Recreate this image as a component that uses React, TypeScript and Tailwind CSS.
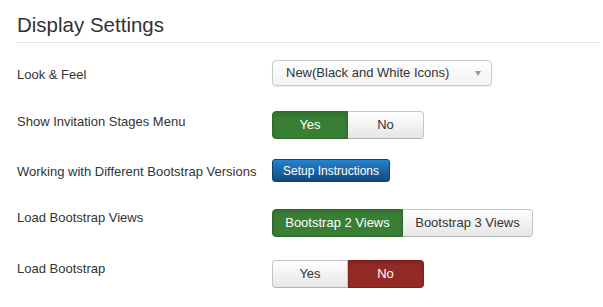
import React from "react";

const font = { fontFamily: '"Liberation Sans", Arial, sans-serif' };

function Row({ label, pt, h, children }: { label: string; pt: string; h: string; children: React.ReactNode }) {
  return (
    <div className={`flex items-start ${h}`}>
      <div className={`w-[255px] shrink-0 text-[13px] leading-[18px] text-[#333] ${pt}`}>{label}</div>
      <div>{children}</div>
    </div>
  );
}

const offBtn =
  "flex items-center justify-center h-full text-[13px] text-[#333] bg-gradient-to-b from-white to-[#e6e6e6] border border-[#c5c5c5] border-b-[#b3b3b3]";

export default function App() {
  return (
    <div className="w-[603px] h-[307px] bg-white overflow-hidden pl-[17px] pr-[3px]" style={font}>
      <div className="pt-[12px] h-[43px] border-b border-[#e5e5e5] text-[20.5px] leading-[26px] text-[#333]">
        Display Settings
      </div>
      <div className="pt-[17px]">
        <Row label="Look & Feel" pt="pt-[6px]" h="h-[51px]">
          <div className="relative w-[220px] h-[26px] rounded-[4px] border border-[#c8c8c8] bg-gradient-to-b from-white to-[#f2f2f2] shadow-[0_1px_1px_rgba(0,0,0,0.08)] flex items-center pl-[13px] text-[13px] text-[#333]">
            New(Black and White Icons)
            <span className="absolute right-[10px] top-[10px] w-0 h-0 border-l-[3.5px] border-r-[3.5px] border-t-[5px] border-l-transparent border-r-transparent border-t-[#999]" />
          </div>
        </Row>
        <Row label="Show Invitation Stages Menu" pt="pt-[2px]" h="h-[48px]">
          <div className="flex h-[28px] w-[152px]">
            <div className="w-[76px] flex items-center justify-center h-full text-[13px] text-white bg-[#387e35] border border-[#2d6a2b] rounded-l-[4px] shadow-[inset_0_2px_4px_rgba(0,0,0,0.15)]">
              Yes
            </div>
            <div className={`w-[76px] rounded-r-[4px] border-l-0 ${offBtn}`}>No</div>
          </div>
        </Row>
        <Row label="Working with Different Bootstrap Versions" pt="pt-[4px]" h="h-[50px]">
          <div className="w-[118px] h-[23px] flex items-center justify-center rounded-[3px] text-[12px] text-white bg-gradient-to-b from-[#2384d3] to-[#15497c] border border-[#124070]">
            Setup Instructions
          </div>
        </Row>
        <Row label="Load Bootstrap Views" pt="pt-[0px]" h="h-[51px]">
          <div className="flex h-[28px]">
            <div className="w-[131px] flex items-center justify-center h-full text-[13px] text-white bg-[#387e35] border border-[#2d6a2b] rounded-l-[4px] shadow-[inset_0_2px_4px_rgba(0,0,0,0.15)]">
              Bootstrap 2 Views
            </div>
            <div className={`w-[130px] rounded-r-[4px] border-l-0 ${offBtn}`}>Bootstrap 3 Views</div>
          </div>
        </Row>
        <Row label="Load Bootstrap" pt="pt-[0px]" h="h-[47px]">
          <div className="flex h-[28px] w-[152px]">
            <div className={`w-[76px] rounded-l-[4px] ${offBtn}`}>Yes</div>
            <div className="w-[76px] flex items-center justify-center h-full text-[13px] text-white bg-[#942a25] border border-[#7d211d] border-l-0 rounded-r-[4px] shadow-[inset_0_2px_4px_rgba(0,0,0,0.15)]">
              No
            </div>
          </div>
        </Row>
      </div>
    </div>
  );
}
